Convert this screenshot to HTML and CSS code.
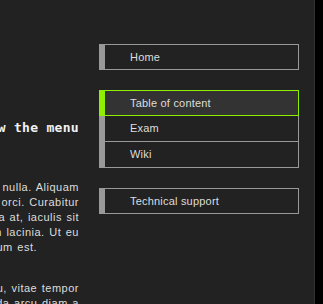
FILE: index.html
```html
<!DOCTYPE html>
<html lang="en">
<head>
    <meta charset="UTF-8">
    <meta name="viewport" content="width=device-width, initial-scale=1.0">
    <title>Course</title>
    <link rel="stylesheet" href="styles.css">
</head>
<body>
    <div id="page">
        <div id="content">
            <h2 class="line heading">Links below the menu</h2>
            <div class="para">
                <div class="line">Lorem ipsum dolor sit amet, consectetur et nulla. Aliquam</div>
                <div class="line">Sed ut libero in ligula faucibus rhoncus, orci. Curabitur</div>
                <div class="line">Nulla facilisi donec in lectus malesuada at, iaculis sit</div>
                <div class="line">Vivamus auctor amet nibh rutrum lacinia. Ut eu</div>
                <div class="line last">Suspendisse potenti vestibulum est.</div>
            </div>
            <div class="para">
                <div class="line">Pellentesque habitant morbi lorem arcu, vitae tempor</div>
                <div class="line">Praesent ullamcorper tellus malesuada arcu diam a</div>
            </div>
        </div>
        <div id="sidebar">
            <ul class="menu">
                <li><a href="#">Home</a></li>
            </ul>
            <ul class="menu">
                <li class="active"><a href="#">Table of content</a></li>
                <li><a href="#">Exam</a></li>
                <li class="end"><a href="#">Wiki</a></li>
            </ul>
            <ul class="menu">
                <li><a href="#">Technical support</a></li>
            </ul>
        </div>
        <div id="edge"></div>
    </div>
</body>
</html>
```
FILE: styles.css
```css
*{
    margin: 0;
    padding: 0;
}
body{
    background-color: #222;
    font-family: "Liberation Sans", Arial, sans-serif;
    color: #ddd;
    height: 304px;
    overflow: hidden;
}
#page{
    display: flex;
    height: 100%;
}
#content{
    width: 79px;
    flex-shrink: 0;
    margin-right: 20px;
    padding-top: 120px;
}
.line{
    display: flex;
    justify-content: flex-end;
    white-space: nowrap;
    font-size: 11px;
    line-height: 15px;
    letter-spacing: 0.5px;
    word-spacing: 1px;
}
.heading{
    font-family: "DejaVu Sans Mono", monospace;
    font-size: 13px;
    font-weight: bold;
    letter-spacing: 0.3px;
    word-spacing: 0;
    color: #f2f2f2;
    margin-bottom: 45px;
}
.para{
    margin-bottom: 26px;
}
.last{
    padding-right: 42px;
}
#sidebar{
    width: 200px;
    flex-shrink: 0;
    padding-top: 44px;
}
.menu{
    list-style: none;
    margin-bottom: 20px;
}
.menu li{
    border: 1px solid #999;
    border-left: 6px solid #999;
    height: 24px;
}
.menu li + li{
    border-top: none;
    height: 25px;
}
.menu li.active{
    border-color: #8fef00;
    background-color: #333;
}
.menu li.active + li{
    border-top: none;
    height: 25px;
}
.menu li.end{
    height: 25px;
}
.menu a{
    display: block;
    padding-left: 25px;
    line-height: 24px;
    font-size: 11px;
    letter-spacing: 0.2px;
    color: #ddd;
    text-decoration: none;
}
#edge{
    margin-left: auto;
    width: 8px;
    border-left: 1px solid #333;
    background-color: #000;
}
```
